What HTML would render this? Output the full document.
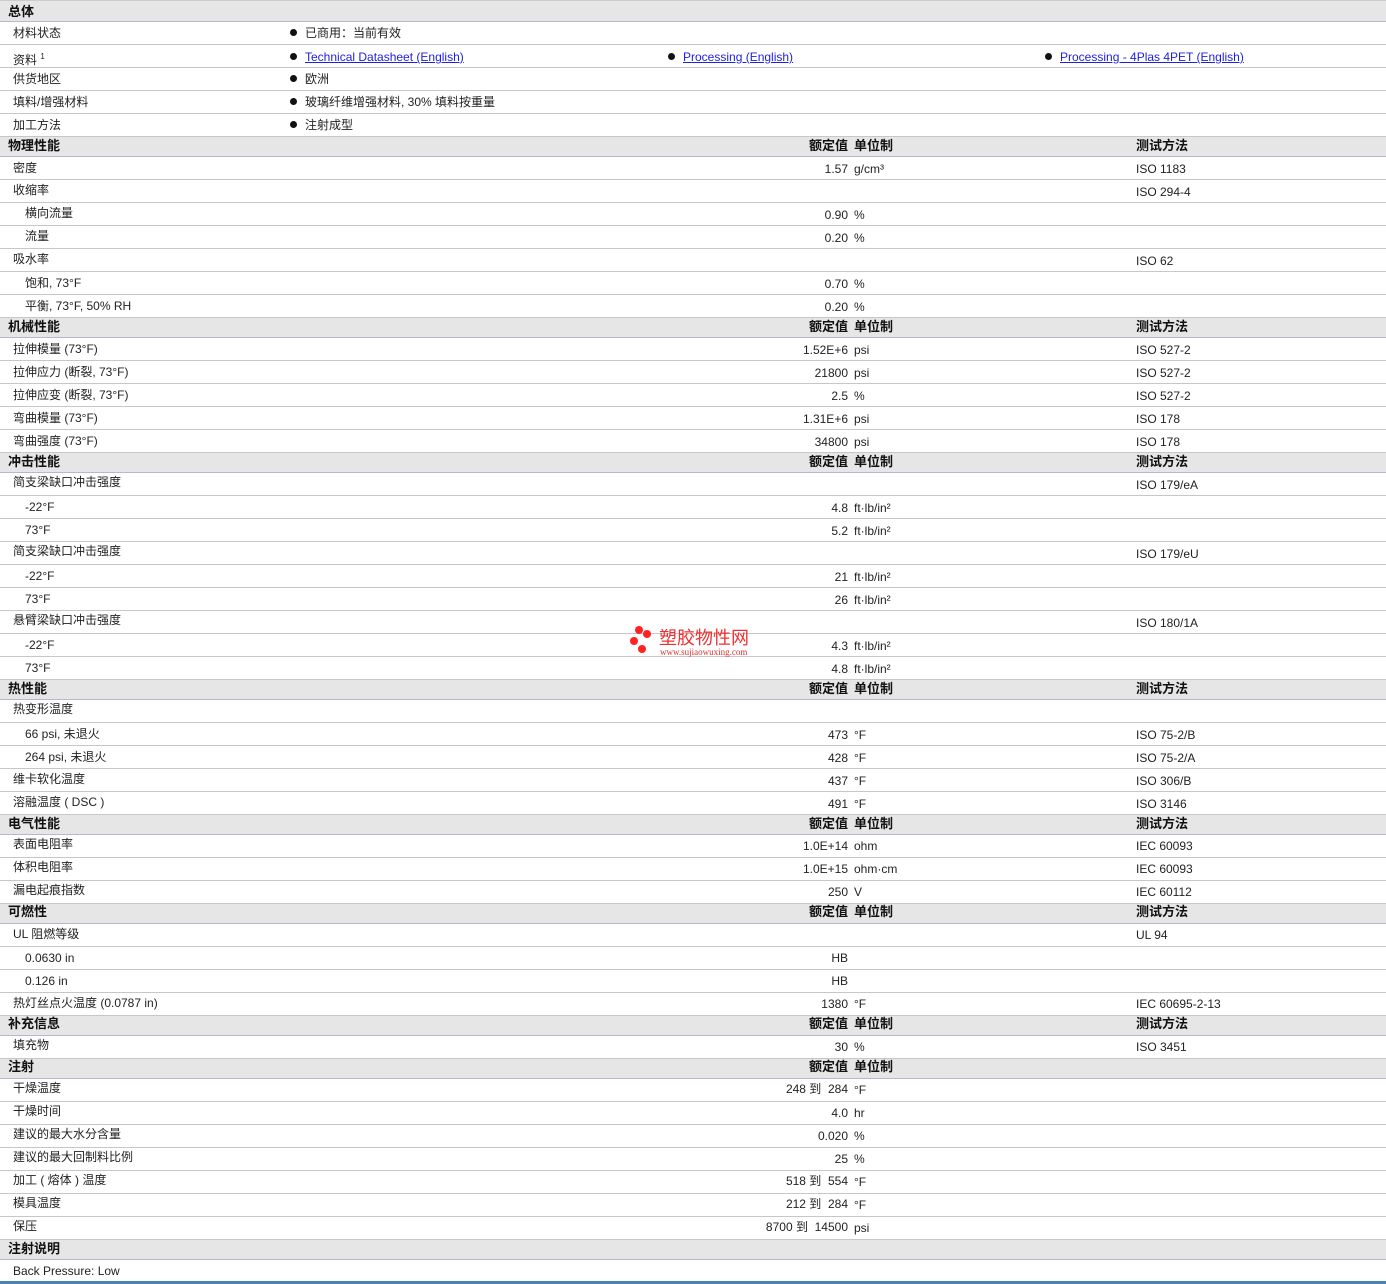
<!DOCTYPE html>
<html><head><meta charset="utf-8">
<style>
*{margin:0;padding:0;box-sizing:border-box}
body{width:1386px;height:1284px;background:#fff;font-family:"Liberation Sans","Noto Sans CJK SC",sans-serif;font-size:12px;color:#222;position:relative;overflow:hidden}
.r{position:absolute;left:0;width:1386px;border-bottom:1px solid #c6c6cc}
.h{background:#e6e6e6;border-bottom:1px solid #b8b8cc;font-weight:bold;font-size:13px;color:#111}
.t{position:absolute;white-space:nowrap;line-height:14px}
.h .t{margin-top:1px}
.l{left:13px}.s{left:25px}.hl{left:8px}
.v{right:538px;text-align:right}
.u{left:854px}
.m{left:1136px}
.b{left:290px}
.b::before{content:"";display:inline-block;width:7px;height:7px;border-radius:50%;background:#111;margin-right:8px;vertical-align:1px}
a{color:#2020e0;text-decoration:underline}
</style></head><body>
<div class="r h" style="top:0;height:22px;border-top:1px solid #ccc"><span class="t hl" style="top:3px">总体</span></div>
<div class="r" style="top:22px;height:23px"><span class="t l" style="top:4px">材料状态</span><span class="t b" style="top:4px">已商用：当前有效</span></div>
<div class="r" style="top:45px;height:23px"><span class="t l" style="top:5px">资料 <sup style="font-size:8px">1</sup></span><span class="t b" style="top:5px"><a>Technical Datasheet (English)</a></span><span class="t b" style="left:668px;top:5px"><a>Processing (English)</a></span><span class="t b" style="left:1045px;top:5px"><a>Processing - 4Plas 4PET (English)</a></span></div>
<div class="r" style="top:68px;height:23px"><span class="t l" style="top:4px">供货地区</span><span class="t b" style="top:4px">欧洲</span></div>
<div class="r" style="top:91px;height:23px"><span class="t l" style="top:4px">填料/增强材料</span><span class="t b" style="top:4px">玻璃纤维增强材料, 30% 填料按重量</span></div>
<div class="r" style="top:114px;height:23px"><span class="t l" style="top:4px">加工方法</span><span class="t b" style="top:4px">注射成型</span></div>

<div class="r h" style="top:137px;height:20px"><span class="t hl" style="top:1px">物理性能</span><span class="t v" style="top:1px">额定值</span><span class="t u" style="top:1px">单位制</span><span class="t m" style="top:1px">测试方法</span></div>
<div class="r" style="top:157px;height:23px"><span class="t l" style="top:4px">密度</span><span class="t v" style="top:5px">1.57</span><span class="t u" style="top:5px">g/cm³</span><span class="t m" style="top:5px">ISO 1183</span></div>
<div class="r" style="top:180px;height:23px"><span class="t l" style="top:3px">收缩率</span><span class="t m" style="top:5px">ISO 294-4</span></div>
<div class="r" style="top:203px;height:23px"><span class="t s" style="top:3px">横向流量</span><span class="t v" style="top:5px">0.90</span><span class="t u" style="top:5px">%</span></div>
<div class="r" style="top:226px;height:23px"><span class="t s" style="top:3px">流量</span><span class="t v" style="top:5px">0.20</span><span class="t u" style="top:5px">%</span></div>
<div class="r" style="top:249px;height:23px"><span class="t l" style="top:3px">吸水率</span><span class="t m" style="top:5px">ISO 62</span></div>
<div class="r" style="top:272px;height:23px"><span class="t s" style="top:4px">饱和, 73°F</span><span class="t v" style="top:5px">0.70</span><span class="t u" style="top:5px">%</span></div>
<div class="r" style="top:295px;height:23px"><span class="t s" style="top:4px">平衡, 73°F, 50% RH</span><span class="t v" style="top:5px">0.20</span><span class="t u" style="top:5px">%</span></div>

<div class="r h" style="top:318px;height:20px"><span class="t hl" style="top:1px">机械性能</span><span class="t v" style="top:1px">额定值</span><span class="t u" style="top:1px">单位制</span><span class="t m" style="top:1px">测试方法</span></div>
<div class="r" style="top:338px;height:23px"><span class="t l" style="top:4px">拉伸模量 (73°F)</span><span class="t v" style="top:5px">1.52E+6</span><span class="t u" style="top:5px">psi</span><span class="t m" style="top:5px">ISO 527-2</span></div>
<div class="r" style="top:361px;height:23px"><span class="t l" style="top:4px">拉伸应力 (断裂, 73°F)</span><span class="t v" style="top:5px">21800</span><span class="t u" style="top:5px">psi</span><span class="t m" style="top:5px">ISO 527-2</span></div>
<div class="r" style="top:384px;height:23px"><span class="t l" style="top:4px">拉伸应变 (断裂, 73°F)</span><span class="t v" style="top:5px">2.5</span><span class="t u" style="top:5px">%</span><span class="t m" style="top:5px">ISO 527-2</span></div>
<div class="r" style="top:407px;height:23px"><span class="t l" style="top:4px">弯曲模量 (73°F)</span><span class="t v" style="top:5px">1.31E+6</span><span class="t u" style="top:5px">psi</span><span class="t m" style="top:5px">ISO 178</span></div>
<div class="r" style="top:430px;height:23px"><span class="t l" style="top:4px">弯曲强度 (73°F)</span><span class="t v" style="top:5px">34800</span><span class="t u" style="top:5px">psi</span><span class="t m" style="top:5px">ISO 178</span></div>

<div class="r h" style="top:453px;height:20px"><span class="t hl" style="top:1px">冲击性能</span><span class="t v" style="top:1px">额定值</span><span class="t u" style="top:1px">单位制</span><span class="t m" style="top:1px">测试方法</span></div>
<div class="r" style="top:473px;height:23px"><span class="t l" style="top:2px">简支梁缺口冲击强度</span><span class="t m" style="top:5px">ISO 179/eA</span></div>
<div class="r" style="top:496px;height:23px"><span class="t s" style="top:4px">-22°F</span><span class="t v" style="top:5px">4.8</span><span class="t u" style="top:5px">ft·lb/in²</span></div>
<div class="r" style="top:519px;height:23px"><span class="t s" style="top:4px">73°F</span><span class="t v" style="top:5px">5.2</span><span class="t u" style="top:5px">ft·lb/in²</span></div>
<div class="r" style="top:542px;height:23px"><span class="t l" style="top:2px">简支梁缺口冲击强度</span><span class="t m" style="top:5px">ISO 179/eU</span></div>
<div class="r" style="top:565px;height:23px"><span class="t s" style="top:4px">-22°F</span><span class="t v" style="top:5px">21</span><span class="t u" style="top:5px">ft·lb/in²</span></div>
<div class="r" style="top:588px;height:23px"><span class="t s" style="top:4px">73°F</span><span class="t v" style="top:5px">26</span><span class="t u" style="top:5px">ft·lb/in²</span></div>
<div class="r" style="top:611px;height:23px"><span class="t l" style="top:2px">悬臂梁缺口冲击强度</span><span class="t m" style="top:5px">ISO 180/1A</span></div>
<div class="r" style="top:634px;height:23px"><span class="t s" style="top:4px">-22°F</span><span class="t v" style="top:5px">4.3</span><span class="t u" style="top:5px">ft·lb/in²</span></div>
<div class="r" style="top:657px;height:23px"><span class="t s" style="top:4px">73°F</span><span class="t v" style="top:5px">4.8</span><span class="t u" style="top:5px">ft·lb/in²</span></div>

<div class="r h" style="top:680px;height:20px"><span class="t hl" style="top:1px">热性能</span><span class="t v" style="top:1px">额定值</span><span class="t u" style="top:1px">单位制</span><span class="t m" style="top:1px">测试方法</span></div>
<div class="r" style="top:700px;height:23px"><span class="t l" style="top:2px">热变形温度</span></div>
<div class="r" style="top:723px;height:23px"><span class="t s" style="top:4px">66 psi, 未退火</span><span class="t v" style="top:5px">473</span><span class="t u" style="top:5px">°F</span><span class="t m" style="top:5px">ISO 75-2/B</span></div>
<div class="r" style="top:746px;height:23px"><span class="t s" style="top:4px">264 psi, 未退火</span><span class="t v" style="top:5px">428</span><span class="t u" style="top:5px">°F</span><span class="t m" style="top:5px">ISO 75-2/A</span></div>
<div class="r" style="top:769px;height:23px"><span class="t l" style="top:3px">维卡软化温度</span><span class="t v" style="top:5px">437</span><span class="t u" style="top:5px">°F</span><span class="t m" style="top:5px">ISO 306/B</span></div>
<div class="r" style="top:792px;height:23px"><span class="t l" style="top:3px">溶融温度 ( DSC )</span><span class="t v" style="top:5px">491</span><span class="t u" style="top:5px">°F</span><span class="t m" style="top:5px">ISO 3146</span></div>

<div class="r h" style="top:815px;height:20px"><span class="t hl" style="top:1px">电气性能</span><span class="t v" style="top:1px">额定值</span><span class="t u" style="top:1px">单位制</span><span class="t m" style="top:1px">测试方法</span></div>
<div class="r" style="top:835px;height:23px"><span class="t l" style="top:2px">表面电阻率</span><span class="t v" style="top:4px">1.0E+14</span><span class="t u" style="top:4px">ohm</span><span class="t m" style="top:4px">IEC 60093</span></div>
<div class="r" style="top:858px;height:23px"><span class="t l" style="top:2px">体积电阻率</span><span class="t v" style="top:4px">1.0E+15</span><span class="t u" style="top:4px">ohm·cm</span><span class="t m" style="top:4px">IEC 60093</span></div>
<div class="r" style="top:881px;height:23px"><span class="t l" style="top:2px">漏电起痕指数</span><span class="t v" style="top:4px">250</span><span class="t u" style="top:4px">V</span><span class="t m" style="top:4px">IEC 60112</span></div>

<div class="r h" style="top:904px;height:20px"><span class="t hl" style="top:0px">可燃性</span><span class="t v" style="top:0px">额定值</span><span class="t u" style="top:0px">单位制</span><span class="t m" style="top:0px">测试方法</span></div>
<div class="r" style="top:924px;height:23px"><span class="t l" style="top:3px">UL 阻燃等级</span><span class="t m" style="top:4px">UL 94</span></div>
<div class="r" style="top:947px;height:23px"><span class="t s" style="top:4px">0.0630 in</span><span class="t v" style="top:4px">HB</span></div>
<div class="r" style="top:970px;height:23px"><span class="t s" style="top:4px">0.126 in</span><span class="t v" style="top:4px">HB</span></div>
<div class="r" style="top:993px;height:23px"><span class="t l" style="top:3px">热灯丝点火温度 (0.0787 in)</span><span class="t v" style="top:4px">1380</span><span class="t u" style="top:4px">°F</span><span class="t m" style="top:4px">IEC 60695-2-13</span></div>

<div class="r h" style="top:1016px;height:20px"><span class="t hl" style="top:0px">补充信息</span><span class="t v" style="top:0px">额定值</span><span class="t u" style="top:0px">单位制</span><span class="t m" style="top:0px">测试方法</span></div>
<div class="r" style="top:1036px;height:23px"><span class="t l" style="top:2px">填充物</span><span class="t v" style="top:4px">30</span><span class="t u" style="top:4px">%</span><span class="t m" style="top:4px">ISO 3451</span></div>

<div class="r h" style="top:1059px;height:20px"><span class="t hl" style="top:0px">注射</span><span class="t v" style="top:0px">额定值</span><span class="t u" style="top:0px">单位制</span></div>
<div class="r" style="top:1079px;height:23px"><span class="t l" style="top:2px">干燥温度</span><span class="t v" style="top:3px">248 到&nbsp; 284</span><span class="t u" style="top:4px">°F</span></div>
<div class="r" style="top:1102px;height:23px"><span class="t l" style="top:2px">干燥时间</span><span class="t v" style="top:4px">4.0</span><span class="t u" style="top:4px">hr</span></div>
<div class="r" style="top:1125px;height:23px"><span class="t l" style="top:2px">建议的最大水分含量</span><span class="t v" style="top:4px">0.020</span><span class="t u" style="top:4px">%</span></div>
<div class="r" style="top:1148px;height:23px"><span class="t l" style="top:2px">建议的最大回制料比例</span><span class="t v" style="top:4px">25</span><span class="t u" style="top:4px">%</span></div>
<div class="r" style="top:1171px;height:23px"><span class="t l" style="top:2px">加工 ( 熔体 ) 温度</span><span class="t v" style="top:3px">518 到&nbsp; 554</span><span class="t u" style="top:4px">°F</span></div>
<div class="r" style="top:1194px;height:23px"><span class="t l" style="top:2px">模具温度</span><span class="t v" style="top:3px">212 到&nbsp; 284</span><span class="t u" style="top:4px">°F</span></div>
<div class="r" style="top:1217px;height:23px"><span class="t l" style="top:2px">保压</span><span class="t v" style="top:3px">8700 到&nbsp; 14500</span><span class="t u" style="top:4px">psi</span></div>

<div class="r h" style="top:1240px;height:20px"><span class="t hl" style="top:1px">注射说明</span></div>
<div class="r" style="top:1260px;height:21px;border-bottom:none"><span class="t l" style="top:4px">Back Pressure: Low</span></div>
<div style="position:absolute;left:0;top:1281px;width:1386px;height:3px;background:#4a82b4"></div>

<div style="position:absolute;left:630px;top:625px;width:30px;height:35px">
<div style="position:absolute;left:5px;top:1px;width:8px;height:8px;border-radius:50%;background:#f22"></div>
<div style="position:absolute;left:13px;top:5px;width:8px;height:8px;border-radius:50%;background:#f22"></div>
<div style="position:absolute;left:0;top:12px;width:8px;height:8px;border-radius:50%;background:#f22"></div>
<div style="position:absolute;left:8px;top:20px;width:8px;height:8px;border-radius:50%;background:#f22"></div>
</div>
<div style="position:absolute;left:659px;top:627px;font-size:18px;color:#f03030;line-height:20px;font-family:'Noto Sans CJK SC',sans-serif">塑胶物性网</div>
<div style="position:absolute;left:660px;top:647px;font-size:9px;color:#e03030;font-family:'Liberation Serif',serif">www.sujiaowuxing.com</div>
</body></html>
